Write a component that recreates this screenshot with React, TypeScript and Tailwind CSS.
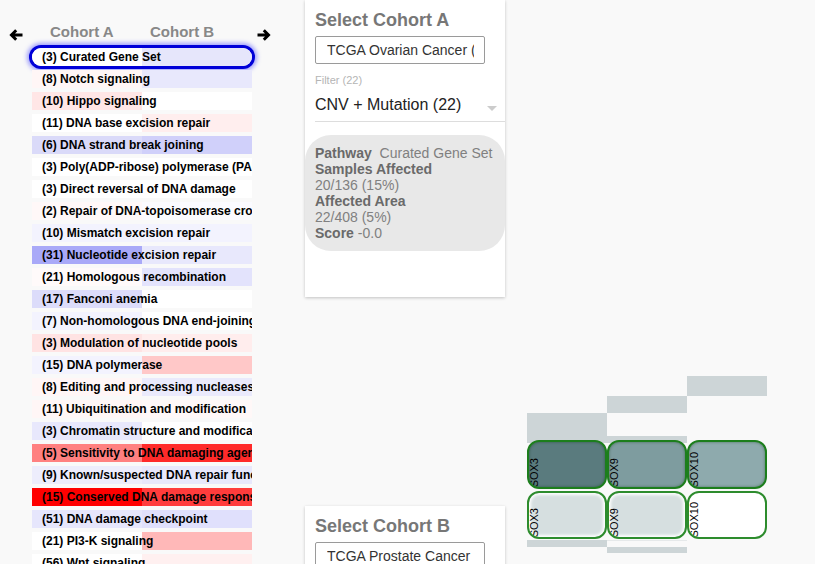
import React from "react";

const rows: [string, string, string][] = [
  ["(3) Curated Gene Set", "#ffffff", "#e6e6fb"],
  ["(8) Notch signaling", "#fff6f6", "#e8e8fc"],
  ["(10) Hippo signaling", "#ffe6e6", "#ffffff"],
  ["(11) DNA base excision repair", "#ffffff", "#ffeeee"],
  ["(6) DNA strand break joining", "#dadaf9", "#d0d0fa"],
  ["(3) Poly(ADP-ribose) polymerase (PARP) enzymes", "#ffffff", "#ffffff"],
  ["(3) Direct reversal of DNA damage", "#ffffff", "#ffffff"],
  ["(2) Repair of DNA-topoisomerase crosslinks", "#fff8f8", "#fbfbff"],
  ["(10) Mismatch excision repair", "#f3f3fe", "#f3f3fe"],
  ["(31) Nucleotide excision repair", "#a9a9f8", "#e8e8fc"],
  ["(21) Homologous recombination", "#fffafa", "#e3e3fc"],
  ["(17) Fanconi anemia", "#dcdcfa", "#ffffff"],
  ["(7) Non-homologous DNA end-joining", "#f3f3fe", "#ffffff"],
  ["(3) Modulation of nucleotide pools", "#ffe3e3", "#ffeded"],
  ["(15) DNA polymerase", "#f3f3fe", "#ffc8c8"],
  ["(8) Editing and processing nucleases", "#fff6f6", "#eaeafc"],
  ["(11) Ubiquitination and modification", "#fff6f6", "#fff8f8"],
  ["(3) Chromatin structure and modification", "#e8e8fc", "#ffffff"],
  ["(5) Sensitivity to DNA damaging agents", "#ff8080", "#ff2a2a"],
  ["(9) Known/suspected DNA repair function", "#ededfc", "#e8e8fc"],
  ["(15) Conserved DNA damage response genes", "#ff0000", "#ff3c3c"],
  ["(51) DNA damage checkpoint", "#e6e6fc", "#e0e0fc"],
  ["(21) PI3-K signaling", "#ffffff", "#ffb8b8"],
  ["(56) Wnt signaling", "#ffffff", "#fff0f0"],
];

function Arrow({ dir }: { dir: "left" | "right" }) {
  return (
    <svg width="14" height="12" viewBox="0 0 14 12" className={"mt-[6px] " + (dir === "right" ? "rotate-180" : "")}>
      <path d="M13.5 6 H2.5 M7.2 1.3 L2.5 6 L7.2 10.7" fill="none" stroke="#000" strokeWidth="3" strokeLinecap="butt" strokeLinejoin="miter" />
    </svg>
  );
}

function CohortCard({ title, cohort, children }: { title: string; cohort: string; children?: React.ReactNode }) {
  return (
    <div className="bg-white w-[200px] shadow-[0_1px_3px_rgba(0,0,0,0.22)] pt-[10px] font-['Liberation_Sans',Arial,sans-serif]">
      <div className="pl-[10px] text-[18px] leading-[20px] font-bold text-[#777777]">{title}</div>
      <div className="ml-[10px] mt-[6px] w-[170px] h-[28px] border border-[#9a9a9a] rounded-[2px] pl-[11px] pr-[10px] flex items-center">
        <div className="overflow-hidden whitespace-nowrap text-[14px] text-[#333333]">{cohort}</div>
      </div>
      {children}
    </div>
  );
}

export default function App() {
  return (
    <div className="w-[815px] h-[564px] bg-[#f9f9f9] flex overflow-hidden">
      {/* Left pathway list */}
      <div className="w-[305px] shrink-0 pt-[22px] font-['Liberation_Sans',Arial,sans-serif]">
        <div className="h-[20px] flex items-center pl-[9px]">
          <Arrow dir="left" />
          <div className="ml-[27px] w-[100px] text-[15px] font-bold text-[#888888]">Cohort A</div>
          <div className="w-[107px] text-[15px] font-bold text-[#888888]">Cohort B</div>
          <Arrow dir="right" />
        </div>
        <div className="ml-[32px] mt-[6px] w-[220px] flex flex-col gap-[4px]">
          {rows.map(([label, a, b], i) => (
            <div
              key={i}
              className={
                "h-[18px] leading-[18px] pl-[10px] text-[12px] font-bold text-black whitespace-nowrap overflow-hidden " +
                (i === 0 ? "rounded-[10px] shadow-[0_0_0_3px_#0000d8,0_0_4px_5px_rgba(70,70,255,0.5)]" : "")
              }
              style={{ background: `linear-gradient(to right, ${a} 50%, ${b} 50%)` }}
            >
              {label}
            </div>
          ))}
        </div>
      </div>

      {/* Cohort cards */}
      <div className="w-[200px] shrink-0 flex flex-col">
        <CohortCard title="Select Cohort A" cohort="TCGA Ovarian Cancer (TCGA-OV)">
          <div className="pl-[10px] mt-[10px] text-[11px] leading-[13px] text-[#b5b5b5]">Filter (22)</div>
          <div className="ml-[10px] mt-[8px] pb-[6px] border-b border-[#dddddd] flex items-start justify-between pr-[8px]">
            <span className="text-[16px] leading-[20px] text-[#222222]">CNV + Mutation (22)</span>
            <svg width="10" height="5" viewBox="0 0 10 5" className="mt-[11px]">
              <path d="M0 0 L10 0 L5 5 Z" fill="#cccccc" />
            </svg>
          </div>
          <div className="mt-[13px] h-[116px] bg-[#e8e8e8] rounded-[26px] pt-[10px] px-[10px] text-[14px] leading-[16px] text-[#808080]">
            <div>
              <span className="font-bold text-[#6a6a6a]">Pathway</span>&nbsp; Curated Gene Set
            </div>
            <div className="font-bold text-[#6a6a6a]">Samples Affected</div>
            <div>20/136 (15%)</div>
            <div className="font-bold text-[#6a6a6a]">Affected Area</div>
            <div>22/408 (5%)</div>
            <div>
              <span className="font-bold text-[#6a6a6a]">Score</span> -0.0
            </div>
          </div>
          <div className="h-[46px]" />
        </CohortCard>
        <div className="mt-[209px]">
          <CohortCard title="Select Cohort B" cohort="TCGA Prostate Cancer (TCGA-PRAD)" />
        </div>
      </div>

      {/* Gene grid */}
      <div className="pl-[22px] pt-[376px]">
        <div className="relative w-[240px] h-[177px] font-['Liberation_Sans',Arial,sans-serif]">
          <div className="absolute left-[160px] top-0 w-[80px] h-[20px] bg-[#cdd5d7]" />
          <div className="absolute left-[80px] top-[20px] w-[80px] h-[17px] bg-[#cdd5d7]" />
          <div className="absolute left-0 top-[37px] w-[80px] h-[30px] bg-[#cdd5d7]" />
          <div className="absolute left-[80px] top-[60px] w-[80px] h-[7px] bg-[#cdd5d7]" />
          <div className="absolute left-0 top-[164px] w-[80px] h-[7px] bg-[#cdd5d7]" />
          <div className="absolute left-[80px] top-[164px] w-[80px] h-px bg-[#e6e9ea]" />
          <div className="absolute left-[80px] top-[171px] w-[80px] h-[6px] bg-[#cdd5d7]" />

          {[
            ["SOX3", "#5a7b7e", 0],
            ["SOX9", "#7e9c9f", 80],
            ["SOX10", "#8eaaad", 160],
          ].map(([g, c, x]) => (
            <div
              key={"a" + g}
              className="absolute top-[64px] w-[80px] h-[49px] border-2 border-[#1c7e1c] rounded-[12px] shadow-[inset_0_0_3px_rgba(0,50,0,0.45)] overflow-hidden"
              style={{ left: x as number, background: c as string }}
            >
              <span className="absolute left-0 bottom-0 text-[11px] leading-[11px] text-black [writing-mode:vertical-rl] rotate-180">
                {g}
              </span>
            </div>
          ))}
          {[
            ["SOX3", "#d6dfe0", 0],
            ["SOX9", "#d6dfe0", 80],
            ["SOX10", "#ffffff", 160],
          ].map(([g, c, x]) => (
            <div
              key={"b" + g}
              className="absolute top-[115px] w-[80px] h-[48px] border-2 border-[#2d8c2d] rounded-[12px] shadow-[inset_0_0_3px_2px_rgba(255,255,255,0.95)] overflow-hidden"
              style={{ left: x as number, background: c as string }}
            >
              <span className="absolute left-0 bottom-0 text-[11px] leading-[11px] text-black [writing-mode:vertical-rl] rotate-180">
                {g}
              </span>
            </div>
          ))}
        </div>
      </div>
    </div>
  );
}
